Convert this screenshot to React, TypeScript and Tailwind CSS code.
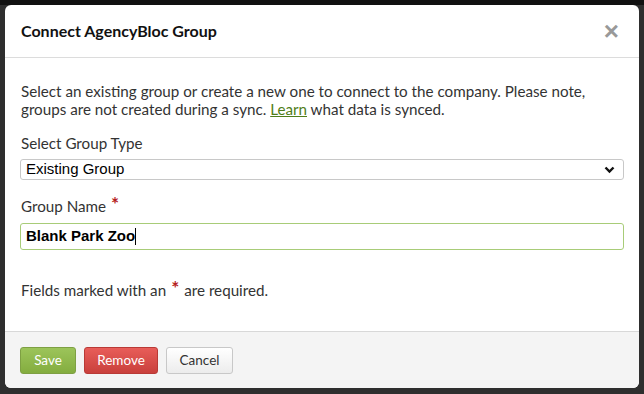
export default function App() {
  return (
    <div className="w-[644px] h-[394px] bg-[#2e2e2e] overflow-hidden relative font-['Lato','Liberation_Sans',sans-serif]">
      <div className="h-[5px] bg-[#111]" />
      <div className="mx-[5px] w-[634px] h-[383px] bg-white rounded-[6px] overflow-hidden flex flex-col">
        <div className="h-[53px] border-b border-[#dcdcdc] flex items-center justify-between pl-[16px] pr-[20px]">
          <h2 className="text-[16px] font-bold text-[#111]">Connect AgencyBloc Group</h2>
          <span className="text-[26px] leading-none font-bold text-[#999] font-['Liberation_Sans',sans-serif]">×</span>
        </div>
        <div className="flex-1 px-[15px] pt-[24px] text-[15.2px] text-[#333]">
          <p className="leading-[18px] pl-px">
            Select an existing group or create a new one to connect to the company. Please note,
            <br />
            groups are not created during a sync.{' '}
            <span className="text-[#4f7d1a] underline">Learn</span> what data is synced.
          </p>
          <div className="mt-[16px] leading-[18px] pl-px">Select Group Type</div>
          <div className="mt-[7px] h-[21px] border border-[#c8c8c8] rounded-[3px] flex items-center justify-between pl-[5px] pr-[8px]">
            <span className="text-[15px] text-black font-['Liberation_Sans',sans-serif]">Existing Group</span>
            <svg width="11" height="8" viewBox="0 0 11 8">
              <path d="M1.5 1.5 L5.5 5.5 L9.5 1.5" fill="none" stroke="#111" strokeWidth="2.4" />
            </svg>
          </div>
          <div className="mt-[17px] leading-[18px] flex items-start pl-px">
            Group Name<span className="text-[#b52020] ml-[5px] text-[19px] font-bold leading-[14px]">*</span>
          </div>
          <div className="mt-[8px] h-[27px] border border-[#a8cc78] rounded-[3px] flex items-center pl-[5px]">
            <span className="text-[15px] font-bold text-black font-['Liberation_Sans',sans-serif]">Blank Park Zoo</span>
            <span className="w-px h-[17px] bg-black" />
          </div>
          <div className="mt-[31px] leading-[18px] flex items-start pl-px">
            Fields marked with an<span className="text-[#b52020] mx-[5px] text-[19px] font-bold leading-[14px]">*</span>are required.
          </div>
        </div>
        <div className="h-[57px] border-t border-[#d8d8d8] bg-[#f4f4f4] flex items-center gap-[8px] pl-[15px] pt-[1px]">
          <button className="h-[27px] w-[56px] rounded-[3px] border border-[#7ea043] bg-gradient-to-b from-[#9cc45a] to-[#84ad3f] text-white text-[13.5px]">Save</button>
          <button className="h-[27px] w-[74px] rounded-[3px] border border-[#b93a36] bg-gradient-to-b from-[#e85d59] to-[#c9403c] text-white text-[13.5px]">Remove</button>
          <button className="h-[27px] w-[67px] rounded-[3px] border border-[#c8c8c8] bg-gradient-to-b from-white to-[#ececec] text-[#333] text-[13.5px]">Cancel</button>
        </div>
      </div>
    </div>
  );
}
